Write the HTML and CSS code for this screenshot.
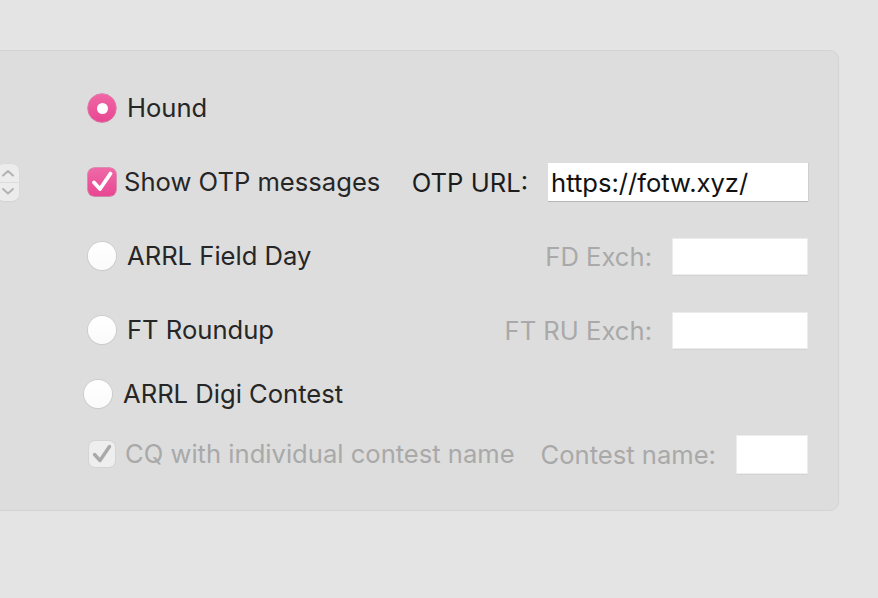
FILE: index.html
```html
<!DOCTYPE html>
<html>
<head>
<meta charset="utf-8">
<link rel="stylesheet" href="styles.css">
</head>
<body>
<div class="panel">
  <div class="row row-first">
    <span class="radio radio-on"></span>
    <span class="label">Hound</span>
  </div>
  <div class="row row-otp">
    <div class="stepper">
      <svg width="22" height="37" viewBox="0 0 22 37">
        <path d="M6 11.5 L11 7 L16 11.5" fill="none" stroke="#b3b3b3" stroke-width="2" stroke-linecap="round" stroke-linejoin="round"/>
        <line x1="1" y1="18.5" x2="21" y2="18.5" stroke="#dcdcdc" stroke-width="1"/>
        <path d="M6 25 L11 29.5 L16 25" fill="none" stroke="#b3b3b3" stroke-width="2" stroke-linecap="round" stroke-linejoin="round"/>
      </svg>
    </div>
    <span class="check check-on">
      <svg width="28" height="28" viewBox="0 0 28 28">
        <path d="M6 14.5 L12 21 L22.5 5.5" fill="none" stroke="#fff" stroke-width="3.8" stroke-linecap="round" stroke-linejoin="round"/>
      </svg>
    </span>
    <span class="label label-check">Show OTP messages</span>
    <div class="field-group">
      <span class="flabel">OTP URL:</span>
      <span class="field field-otp">https://fotw.xyz/</span>
    </div>
  </div>
  <div class="row">
    <span class="radio"></span>
    <span class="label">ARRL Field Day</span>
    <div class="field-group">
      <span class="flabel flabel-off">FD Exch:</span>
      <span class="field field-off field-fd"></span>
    </div>
  </div>
  <div class="row">
    <span class="radio"></span>
    <span class="label">FT Roundup</span>
    <div class="field-group">
      <span class="flabel flabel-off">FT RU Exch:</span>
      <span class="field field-off field-fd"></span>
    </div>
  </div>
  <div class="row row-digi">
    <span class="radio"></span>
    <span class="label">ARRL Digi Contest</span>
  </div>
  <div class="row row-cq">
    <span class="check check-off">
      <svg width="26" height="26" viewBox="0 0 26 26">
        <path d="M5.5 13.5 L11 19.5 L20.5 5.5" fill="none" stroke="#a9a9a9" stroke-width="3.4" stroke-linecap="round" stroke-linejoin="round"/>
      </svg>
    </span>
    <span class="label label-off">CQ with individual contest name</span>
    <div class="field-group">
      <span class="flabel flabel-off">Contest name:</span>
      <span class="field field-off field-cn"></span>
    </div>
  </div>
</div>
</body>
</html>
```
FILE: styles.css
```css
html, body {
  margin: 0;
  padding: 0;
}
body {
  background: #e4e4e4;
  font-family: Inter, "Liberation Sans", sans-serif;
  font-size: 25.6px;
  color: #262626;
  overflow: hidden;
  height: 598px;
}
.panel {
  box-sizing: border-box;
  margin: 50px 0 0 -10px;
  width: 849px;
  height: 461px;
  background: #dddddd;
  border: 1px solid #d3d3d3;
  border-radius: 9px;
  padding: 37px 30px 0 0;
  display: flex;
  flex-direction: column;
}
.row {
  height: 40px;
  display: flex;
  align-items: center;
  padding-left: 97px;
  margin-top: 34px;
}
.row-first { margin-top: 0; }
.row-otp { padding-left: 0; }
.row-digi { margin-top: 24px; padding-left: 93px; }
.row-cq { margin-top: 20px; padding-left: 98px; }

.stepper {
  box-sizing: border-box;
  width: 22px;
  height: 37px;
  margin-left: 6px;
  margin-right: 69px;
  background: #ececec;
  border-radius: 7px;
  box-shadow: 0 0 0 0.5px #d6d6d6, 0 1px 1px rgba(0,0,0,0.06);
  display: flex;
}

.radio {
  box-sizing: border-box;
  width: 28px;
  height: 28px;
  border-radius: 50%;
  background: linear-gradient(#ffffff, #fafafa);
  box-shadow: 0 0 0 1px #cdcdcd, 0 1px 1px rgba(0,0,0,0.08);
  flex: none;
  margin-right: 11px;
}
.radio-on {
  background: linear-gradient(#ef67a5, #e84792);
  box-shadow: 0 0 0 0.5px #d64387, 0 1px 1px rgba(0,0,0,0.08);
  display: flex;
  align-items: center;
  justify-content: center;
}
.radio-on::after {
  content: "";
  width: 11px;
  height: 11px;
  border-radius: 50%;
  background: #fff;
}

.check {
  box-sizing: border-box;
  width: 28px;
  height: 28px;
  border-radius: 6px;
  flex: none;
  display: flex;
}
.check-on {
  background: linear-gradient(#ef69a7, #e84792);
  box-shadow: 0 0 0 0.5px #d64387, 0 1px 1px rgba(0,0,0,0.08);
  margin-right: 8px;
}
.check-off {
  width: 26px;
  height: 26px;
  background: #eeeeee;
  box-shadow: 0 0 0 1px #d4d4d4;
  margin-right: 10px;
}

.label {
  white-space: nowrap;
  line-height: 1;
}
.label-off { color: #a9a9a9; }

.field-group {
  margin-left: auto;
  display: flex;
  align-items: center;
  gap: 20px;
}
.flabel {
  color: #1c1c1c;
  white-space: nowrap;
}
.flabel-off { color: #a9a9a9; }

.field {
  box-sizing: border-box;
  height: 38px;
  background: #fff;
  display: flex;
  align-items: center;
  color: #111;
  white-space: nowrap;
}
.field-otp {
  width: 260px;
  padding-left: 3px;
  box-shadow: 0 1px 0 #b5b5b5, 1px 0 0 #d0d0d0, -0.5px 0 0 #e0e0e0;
}
.field-off {
  border: 1px solid #ececec;
  box-shadow: 0 1px 0 #d4d4d4;
}
.field-fd { width: 136px; height: 37px; }
.field-cn { width: 72px; height: 39px; }
```
